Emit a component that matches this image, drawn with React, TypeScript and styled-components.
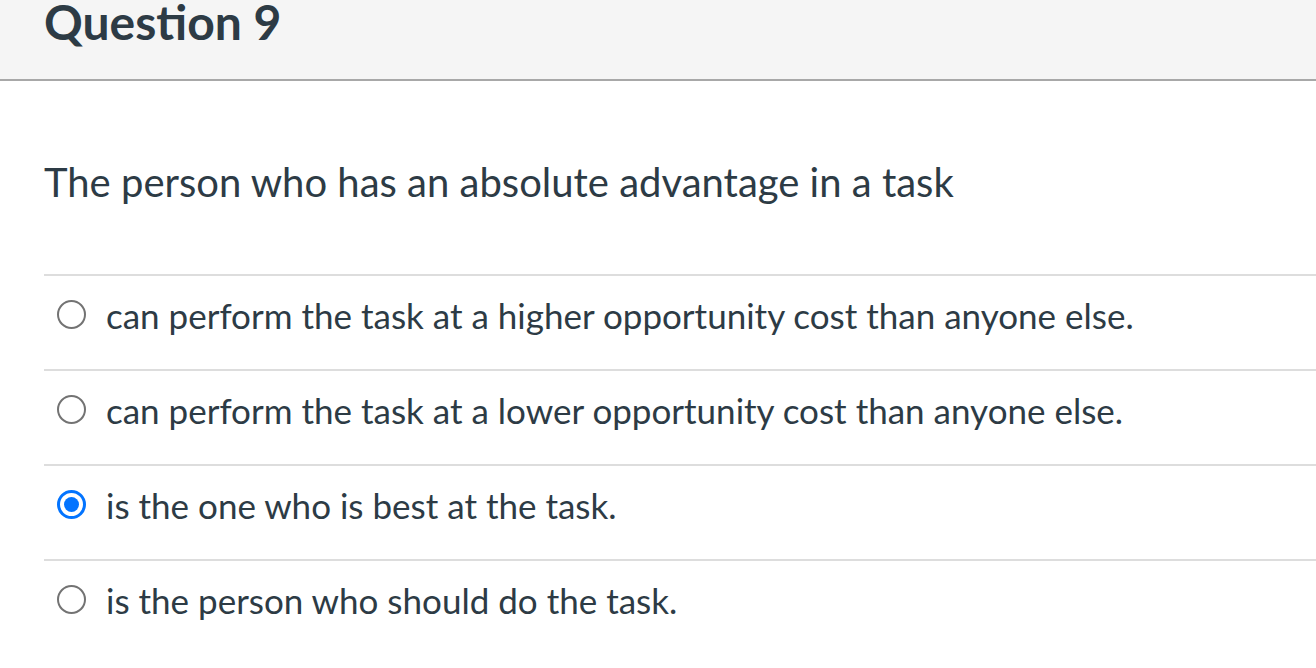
import { createGlobalStyle, styled } from "styled-components";

const GlobalStyle = createGlobalStyle`
  html, body {
    margin: 0;
    padding: 0;
    background: #ffffff;
  }
  body {
    font-family: Lato, "Liberation Sans", sans-serif;
    color: #2d3b45;
  }
`;

interface Answer {
  id: string;
  text: string;
  selected?: boolean;
}

const answers: Answer[] = [
  { id: "a", text: "can perform the task at a higher opportunity cost than anyone else." },
  { id: "b", text: "can perform the task at a lower opportunity cost than anyone else." },
  { id: "c", text: "is the one who is best at the task.", selected: true },
  { id: "d", text: "is the person who should do the task." },
];

const Page = styled.div`
  width: 1316px;
  height: 668px;
  overflow: hidden;
  box-sizing: border-box;
`;

const Header = styled.div`
  height: 79px;
  background-color: #f5f5f5;
  border-bottom: 2px solid #a8a8a8;
  padding: 0 44px;
  box-sizing: content-box;
`;

const Title = styled.h2`
  margin: 0;
  font-size: 48px;
  font-weight: 700;
  line-height: 44px;
  color: #2d3b45;
`;

const Body = styled.div`
  padding: 0 0 0 44px;
`;

const Prompt = styled.div`
  font-size: 40px;
  line-height: 48px;
  padding: 77px 0 68px;
`;

const AnswerList = styled.div`
  display: flex;
  flex-direction: column;
`;

const AnswerRow = styled.label`
  display: flex;
  align-items: center;
  height: 93px;
  border-top: 2px solid #dddddd;
  padding-left: 13px;
  gap: 20px;
  cursor: pointer;
`;

const Radio = styled.span<{ $checked?: boolean }>`
  width: 29px;
  height: 29px;
  flex-shrink: 0;
  border-radius: 50%;
  box-sizing: border-box;
  border: ${(p) => (p.$checked ? "3px solid #0374ff" : "2.5px solid #737373")};
  display: flex;
  align-items: center;
  justify-content: center;
  margin-top: -16px;

  &::after {
    content: "";
    display: ${(p) => (p.$checked ? "block" : "none")};
    width: 15px;
    height: 15px;
    border-radius: 50%;
    background-color: #0374ff;
  }
`;

const AnswerText = styled.span`
  font-size: 35px;
  line-height: 42px;
  margin-top: -16px;
`;

export default function App() {
  return (
    <Page>
      <GlobalStyle />
      <Header>
        <Title>Question 9</Title>
      </Header>
      <Body>
        <Prompt>The person who has an absolute advantage in a task</Prompt>
        <AnswerList>
          {answers.map((a) => (
            <AnswerRow key={a.id}>
              <Radio $checked={a.selected} />
              <AnswerText>{a.text}</AnswerText>
            </AnswerRow>
          ))}
        </AnswerList>
      </Body>
    </Page>
  );
}
